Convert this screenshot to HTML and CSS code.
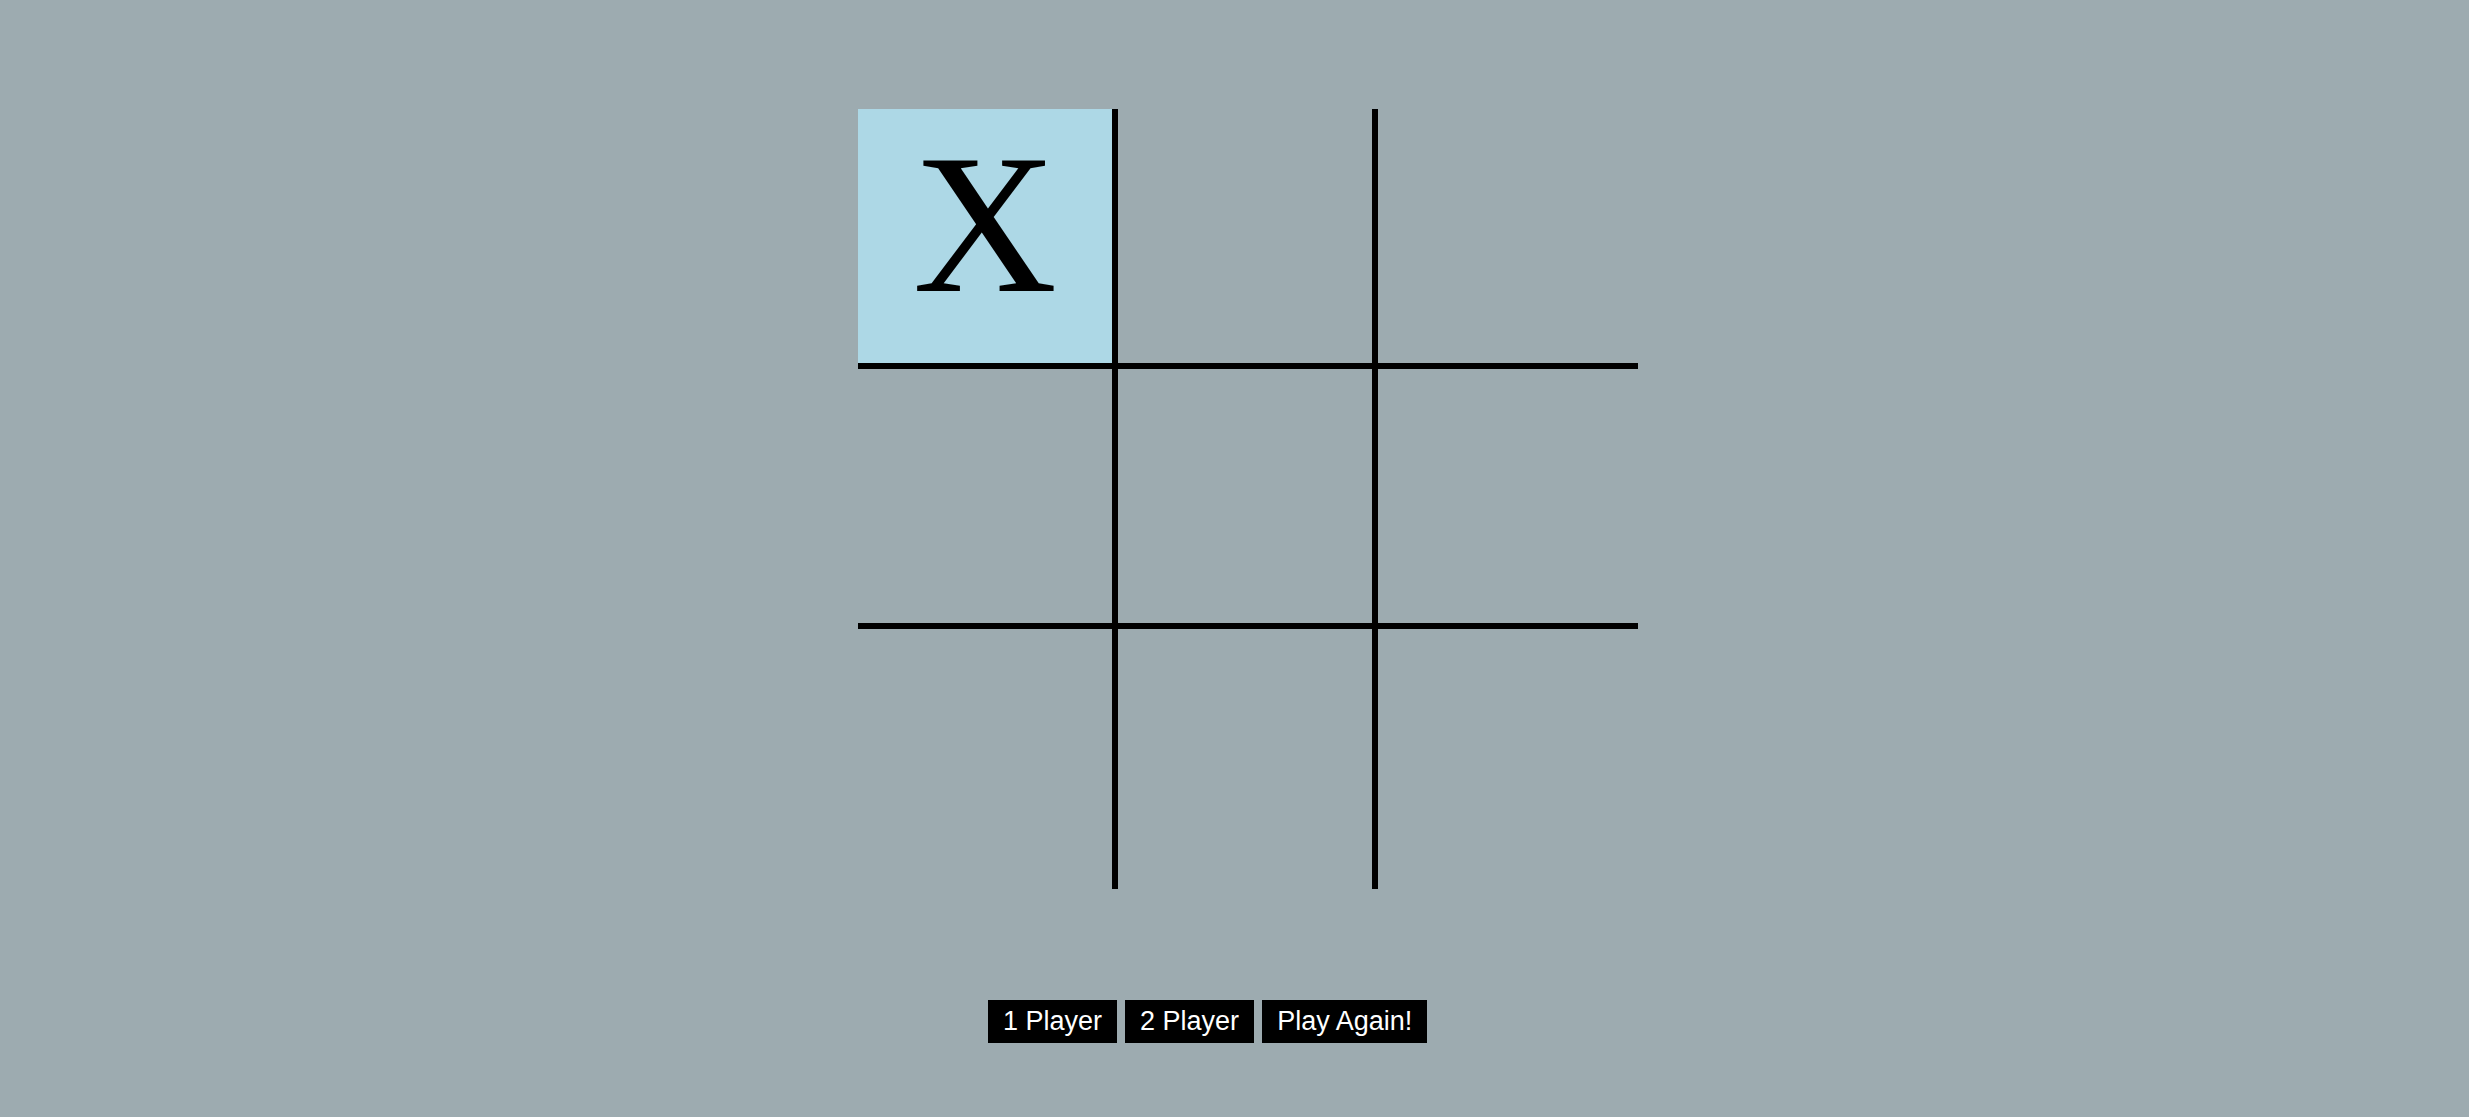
FILE: index.html
```html
<!DOCTYPE html>
<html lang="en">
<head>
<meta charset="utf-8">
<title>Tic Tac Toe</title>
<link rel="stylesheet" href="styles.css">
</head>
<body>
<div class="page">
  <div class="board">
    <div class="cell lit">X</div>
    <div class="cell"></div>
    <div class="cell"></div>
    <div class="cell"></div>
    <div class="cell"></div>
    <div class="cell"></div>
    <div class="cell"></div>
    <div class="cell"></div>
    <div class="cell"></div>
  </div>
  <div class="controls">
    <button class="btn">1 Player</button>
    <button class="btn">2 Player</button>
    <button class="btn">Play Again!</button>
  </div>
</div>
</body>
</html>
```
FILE: styles.css
```css
html, body {
  margin: 0;
  padding: 0;
  background: #9dabb0;
}

.page {
  padding-top: 109px;
}

.board {
  display: grid;
  grid-template-columns: repeat(3, 260px);
  grid-auto-rows: 260px;
  width: 780px;
  margin-left: 858px;
}

.cell {
  box-sizing: border-box;
  font-family: "Liberation Serif", "Times New Roman", serif;
  font-size: 200px;
  line-height: normal;
  text-align: center;
  color: #000;
  overflow: hidden;
}

.cell:nth-child(3n+1),
.cell:nth-child(3n+2) {
  border-right: 6px solid #000;
}

.cell:nth-child(-n+6) {
  border-bottom: 6px solid #000;
}

.cell.lit {
  background: #add8e6;
}

.controls {
  display: flex;
  gap: 8px;
  margin: 111px 0 0 988px;
}

.btn {
  background: #000;
  color: #fff;
  border: none;
  border-radius: 0;
  font-family: "Liberation Sans", Arial, sans-serif;
  font-size: 27px;
  line-height: 31px;
  padding: 6px 15px;
  margin: 0;
}
```
